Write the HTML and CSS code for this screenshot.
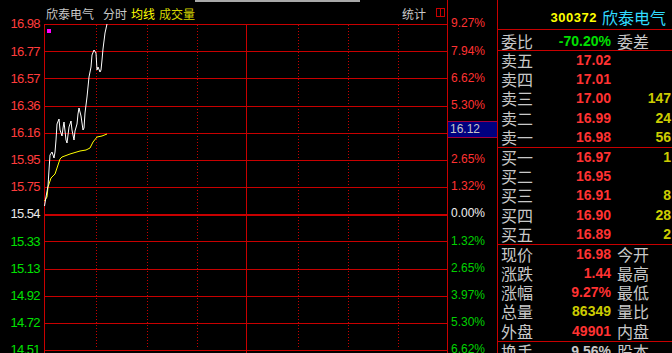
FILE: index.html
```html
<!DOCTYPE html>
<html lang="zh-CN">
<head>
    <meta charset="UTF-8">
    <meta name="viewport" content="width=device-width, initial-scale=1.0">
    <title>欣泰电气 分时</title>
    <link rel="stylesheet" href="styles.css">
</head>
<body>

<div class="screen">
    <!-- price axis -->
    <div class="axis axis-left">
        <span class="up">16.98</span>
        <span class="up">16.77</span>
        <span class="up">16.57</span>
        <span class="up">16.36</span>
        <span class="up">16.16</span>
        <span class="up">15.95</span>
        <span class="up">15.75</span>
        <span class="flat">15.54</span>
        <span class="down">15.33</span>
        <span class="down">15.13</span>
        <span class="down">14.92</span>
        <span class="down">14.72</span>
        <span class="down">14.51</span>
    </div>

    <div class="plot">
        <div class="tabline"></div>
        <div class="plot-head">
            <span class="title">欣泰电气</span>
            <span class="mode">分时</span>
            <span class="avg">均线</span>
            <span class="vol">成交量</span>
            <span class="stat">统计</span>
            <svg class="toggle" width="9" height="9" viewBox="0 0 9 9">
                <rect x="0.5" y="0.5" width="8" height="8" fill="none" stroke="#c80000"/>
                <line x1="4.5" y1="0" x2="4.5" y2="9" stroke="#c80000"/>
            </svg>
        </div>
        <svg class="grid" width="403" height="329" viewBox="0 0 403 329" shape-rendering="crispEdges">
            <g stroke="#c80000" stroke-width="1">
                <line x1="0.5" y1="0" x2="0.5" y2="329"/>
                <line x1="0" y1="0.5" x2="403" y2="0.5"/>
                <line x1="0" y1="27.5" x2="403" y2="27.5"/>
                <line x1="0" y1="54.5" x2="403" y2="54.5"/>
                <line x1="0" y1="82.5" x2="403" y2="82.5"/>
                <line x1="0" y1="109.5" x2="403" y2="109.5"/>
                <line x1="0" y1="136.5" x2="403" y2="136.5"/>
                <line x1="0" y1="163.5" x2="403" y2="163.5"/>
                <line x1="0" y1="217.5" x2="403" y2="217.5"/>
                <line x1="0" y1="245.5" x2="403" y2="245.5"/>
                <line x1="0" y1="272.5" x2="403" y2="272.5"/>
                <line x1="0" y1="299.5" x2="403" y2="299.5"/>
                <line x1="0" y1="326.5" x2="403" y2="326.5"/>
                <line x1="202.5" y1="0" x2="202.5" y2="329"/>
            </g>
            <rect x="0" y="190" width="403" height="2" fill="#c80000"/>
            <g stroke="#c80000" stroke-width="1" stroke-dasharray="1 2">
                <line x1="52.5" y1="1" x2="52.5" y2="324"/>
                <line x1="103.5" y1="1" x2="103.5" y2="324"/>
                <line x1="153.5" y1="1" x2="153.5" y2="324"/>
                <line x1="254.5" y1="1" x2="254.5" y2="324"/>
                <line x1="304.5" y1="1" x2="304.5" y2="324"/>
                <line x1="354.5" y1="1" x2="354.5" y2="324"/>
            </g>
            <rect x="3" y="5" width="4" height="4" fill="#ff00ff"/>
            <polyline fill="none" stroke="#ffff00" stroke-width="1" shape-rendering="auto"
                points="0.5,177 3,173 4,163 7,154 11,150 13,144 16,135 18,133 26,130 36,127 42,126 46,124 49,118 53,113 58,112 63,110"/>
            <polyline fill="none" stroke="#ffffff" stroke-width="1" shape-rendering="auto"
                points="0.5,182 2,173 4,162 5,146 6,131 8,128 10,134 11,128 12,116 13,100 15,95 16,106 18,112 19,104 20,98 22,116 23,119 25,103 27,97 28,106 30,116 31,107 33,100 34,90 35,84 37,92 39,106 40,104 41,89 43,73 45,53 47,43 48,31 50,26 52,29 53,46 54,43 56,48 57,46 58,36 59,25 61,9 63,0"/>
        </svg>
    </div>

    <!-- percent axis -->
    <div class="axis axis-right">
        <span class="up">9.27%</span>
        <span class="up">7.94%</span>
        <span class="up">6.62%</span>
        <span class="up">5.30%</span>
        <span class="up hidden">3.97%</span>
        <span class="up">2.65%</span>
        <span class="up">1.32%</span>
        <span class="flat">0.00%</span>
        <span class="down">1.32%</span>
        <span class="down">2.65%</span>
        <span class="down">3.97%</span>
        <span class="down">5.30%</span>
        <span class="down">6.62%</span>
        <div class="cursor">16.12</div>
    </div>

    <!-- quote panel -->
    <div class="quote">
        <div class="quote-head">
            <span class="code">300372</span>
            <span class="stock">欣泰电气</span>
        </div>
        <div class="row ratio">
            <span class="lbl">委比</span><span class="num green">-70.20%</span><span class="lbl">委差</span>
        </div>
        <div class="book">
            <div class="row"><span class="lbl">卖五</span><span class="num red">17.02</span><span class="qty"></span></div>
            <div class="row"><span class="lbl">卖四</span><span class="num red">17.01</span><span class="qty"></span></div>
            <div class="row"><span class="lbl">卖三</span><span class="num red">17.00</span><span class="qty">147</span></div>
            <div class="row"><span class="lbl">卖二</span><span class="num red">16.99</span><span class="qty">24</span></div>
            <div class="row"><span class="lbl">卖一</span><span class="num red">16.98</span><span class="qty">56</span></div>
        </div>
        <div class="book">
            <div class="row"><span class="lbl">买一</span><span class="num red">16.97</span><span class="qty">1</span></div>
            <div class="row"><span class="lbl">买二</span><span class="num red">16.95</span><span class="qty"></span></div>
            <div class="row"><span class="lbl">买三</span><span class="num red">16.91</span><span class="qty">8</span></div>
            <div class="row"><span class="lbl">买四</span><span class="num red">16.90</span><span class="qty">28</span></div>
            <div class="row"><span class="lbl">买五</span><span class="num red">16.89</span><span class="qty">2</span></div>
        </div>
        <div class="book">
            <div class="row"><span class="lbl">现价</span><span class="num red">16.98</span><span class="lbl">今开</span></div>
            <div class="row"><span class="lbl">涨跌</span><span class="num red">1.44</span><span class="lbl">最高</span></div>
            <div class="row"><span class="lbl">涨幅</span><span class="num red">9.27%</span><span class="lbl">最低</span></div>
            <div class="row"><span class="lbl">总量</span><span class="num yellow">86349</span><span class="lbl">量比</span></div>
            <div class="row"><span class="lbl">外盘</span><span class="num red">49901</span><span class="lbl">内盘</span></div>
        </div>
        <div class="row"><span class="lbl">换手</span><span class="num gray">9.56%</span><span class="lbl">股本</span></div>
    </div>
</div>

</body>
</html>
```

FILE: styles.css
```css
body {
    margin: 0;
    padding: 0;
    background-color: #000;
    overflow: hidden;
    font-family: "Liberation Sans", Arial, "Noto Sans CJK SC", sans-serif;
}
.screen {
    display: flex;
    width: 672px;
    height: 353px;
    overflow: hidden;
}

/* axes */
.axis {
    display: grid;
    grid-auto-rows: 27.17px;
    align-content: start;
    padding-top: 10.4px;
    box-sizing: border-box;
    height: 353px;
    flex-shrink: 0;
    font-size: 12px;
    line-height: 27.17px;
}
.axis-left {
    width: 44px;
    padding-right: 4px;
    text-align: right;
    font-size: 13px;
    letter-spacing: -0.6px;
}
.axis-right {
    width: 49px;
    padding-left: 3px;
    position: relative;
}
.axis-left .up { color: #ff3c3c; }
.axis-left .flat { color: #e8e8e8; }
.axis-left .down { color: #00e000; }
.axis-right .up { color: #ff3232; }
.axis-right .flat { color: #f0f0f0; }
.axis-right .down { color: #00d000; }
.hidden { visibility: hidden; }

.cursor {
    position: absolute;
    top: 121px;
    left: 0;
    width: 49px;
    height: 17px;
    box-sizing: border-box;
    border-top: 1px solid #a00040;
    border-bottom: 1px solid #a00040;
    background-color: #000080;
    color: #c8c8c8;
    font-size: 12px;
    line-height: 15px;
    padding-left: 2px;
}

/* chart */
.plot {
    width: 403px;
    flex-shrink: 0;
    border-right: 1px solid #c80000;
    display: flex;
    flex-direction: column;
}
.tabline {
    height: 2px;
    width: 165px;
    margin-left: 151px;
    background-color: #a8a8a8;
}
.plot-head {
    height: 22px;
    display: flex;
    align-items: center;
    padding-left: 2px;
    padding-right: 2px;
    font-family: "Noto Sans CJK SC", sans-serif;
    font-size: 12px;
    color: #c8c8c8;
}
.plot-head .mode { margin-left: 9px; }
.plot-head .avg { margin-left: 4px; color: #ffff00; }
.plot-head .vol { margin-left: 4px; color: #d4d400; }
.plot-head .stat { margin-left: auto; }
.plot-head .toggle { margin-left: 10px; margin-bottom: 2px; }
.grid {
    display: block;
}

/* quote panel */
.quote {
    width: 174px;
    flex-shrink: 0;
    border-left: 1px solid #c80000;
    font-family: "Noto Sans CJK SC", sans-serif;
    font-size: 16px;
    color: #c8c8c8;
}
.quote-head {
    height: 24px;
    padding-top: 5px;
    padding-right: 6px;
    display: flex;
    justify-content: flex-end;
    align-items: center;
    gap: 5px;
    border-bottom: 1px solid #c80000;
}
.code {
    font-family: "Liberation Sans", Arial, sans-serif;
    font-weight: bold;
    font-size: 13px;
    letter-spacing: 0.5px;
    color: #ffff00;
}
.stock {
    color: #30dcff;
}
.row {
    display: grid;
    grid-template-columns: 32px 78px 1fr;
    padding-left: 3px;
    height: 19.2px;
    line-height: 19.2px;
    white-space: nowrap;
}
.row > :nth-child(3) {
    padding-left: 6px;
    padding-right: 1px;
}
.row.ratio {
    height: 20px;
    line-height: 22px;
    border-bottom: 1px solid #c80000;
}
.book {
    border-bottom: 1px solid #c80000;
}
.num, .qty {
    font-family: "Liberation Sans", Arial, sans-serif;
    font-weight: bold;
    font-size: 14px;
    text-align: right;
}
.qty {
    color: #cccc00;
}
.red { color: #ff3232; }
.green { color: #00e000; }
.yellow { color: #cccc00; }
.gray { color: #c8c8c8; }
```
